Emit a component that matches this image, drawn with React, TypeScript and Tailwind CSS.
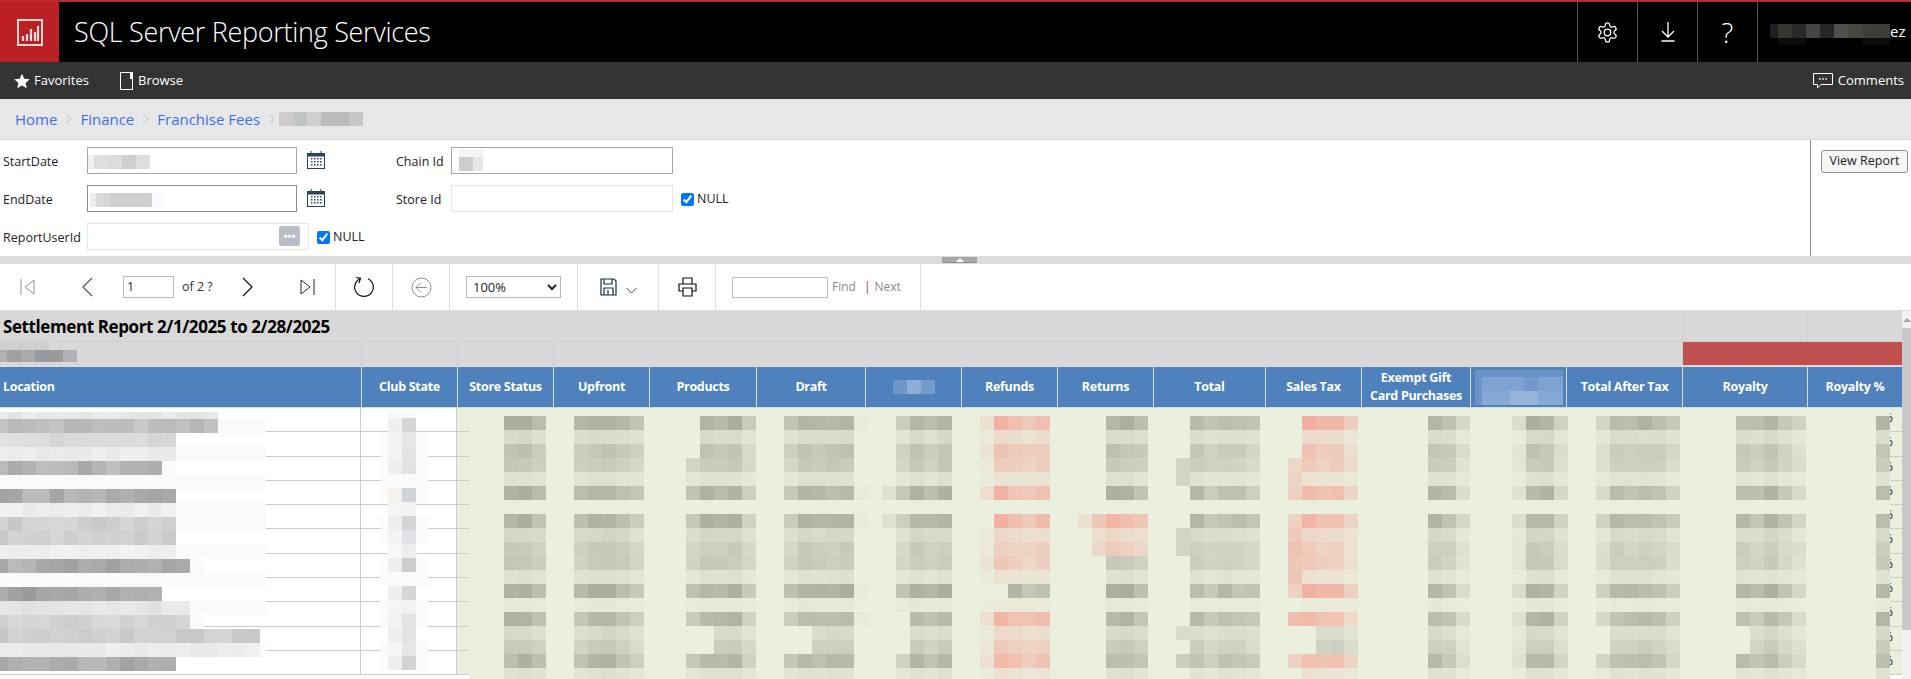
import React from "react";

const FONT = "font-['Open_Sans','Noto_Sans',sans-serif]";
const GRID = "grid grid-cols-[361px_96px_96px_96px_107px_109px_96px_96px_96px_112px_96px_109px_96px_116px_125px_95px]";

type R = { x: number; y: number; w: number; h: number; c: string };

const hex = (s: string) => [1, 3, 5].map((i) => parseInt(s.slice(i, i + 2), 16));
const mix = (a: string, b: string, t: number) => {
  const A = hex(a);
  const B = hex(b);
  const v = Math.pow(Math.max(0, Math.min(1, t)), 1.3);
  return `rgb(${A.map((n, i) => Math.round(n + (B[i] - n) * v)).join(",")})`;
};
const jitter = (a: number, b: number) => {
  const s = Math.sin(a * 12.9898 + b * 78.233) * 43758.5453;
  return (s - Math.floor(s) - 0.5) * 0.16;
};

const GREEN = "#eaefde";
const GREY = "#a9ae9e";
const PINK = "#f2ae9f";
const BANDS = [0.95, 0.4, 0.72, 0.65, 0.3, 0.9, 0.03, 0.92, 0.45, 0.62, 0.64, 0.3, 0.95, 0.17, 0.88, 0.42, 0.62, 0.85, 0.3];

type Col = {
  k: number;
  p: number[];
  pink?: boolean;
  skip?: Record<number, number>;
  extra?: Record<number, [number, number]>;
};

const COLS: Col[] = [
  { k: 36, p: [1, 1.05, 0.85] },
  { k: 41, p: [0.85, 1, 1.05, 0.9, 0.7] },
  { k: 49, p: [0.75, 1, 0.95, 1, 0.65], skip: { 0: 1, 1: 1, 2: 1, 15: 2, 16: 2 } },
  { k: 56, p: [0.75, 1, 0.95, 0.95, 1], skip: { 15: 2, 16: 2 }, extra: { 0: [61, 0.12], 5: [61, 0.12], 7: [61, 0.12], 12: [61, 0.12], 14: [61, 0.12] } },
  { k: 64, p: [0.7, 1, 0.85, 1], skip: { 14: 1, 15: 1, 16: 1 }, extra: { 5: [63, 0.3], 7: [63, 0.3] } },
  { k: 70, p: [0.35, 1, 0.88, 0.78, 0.88], pink: true, skip: { 7: 1, 12: 2 } },
  { k: 79, p: [1, 1, 0.85] },
  { k: 85, p: [0.9, 0.75, 0.85, 0.8, 0.7], extra: { 3: [84, 0.5], 4: [84, 0.5], 8: [84, 0.5], 9: [84, 0.5], 15: [84, 0.4], 17: [84, 0.6] } },
  { k: 93, p: [1, 0.9, 0.88, 0.55], pink: true, extra: { 3: [92, 0.45], 4: [92, 0.5], 5: [92, 0.55], 7: [92, 0.55], 8: [92, 0.65], 9: [92, 0.75], 10: [92, 0.7], 11: [92, 0.7], 12: [92, 0.55], 14: [92, 0.8], 17: [92, 0.55] } },
  { k: 102, p: [1, 0.85, 0.45] },
  { k: 108, p: [0.35, 1, 1, 0.55] },
  { k: 114, p: [0.5, 0.88, 0.85, 0.92, 0.85, 0.6], skip: { 15: 1, 16: 1 } },
  { k: 124, p: [0.9, 0.8, 1, 0.75, 0.5], skip: { 15: 1, 16: 1 } },
  { k: 134, p: [0.95] },
];

const numericCells = (): R[] => {
  const out: R[] = [{ x: 469, y: 2, w: 1421, h: 271, c: GREEN }];
  COLS.forEach((col) => {
    BANDS.forEach((b, band) => {
      const y = 8 + band * 14;
      const skip = col.skip?.[band] ?? 0;
      col.p.forEach((m, i) => {
        if (i < skip) return;
        let pink = !!col.pink;
        if (col.k === 70 && band === 12) pink = false;
        if (col.k === 93 && (band === 15 || band === 16) && i < 1) return;
        if (col.k === 93 && (band === 15 || band === 16)) pink = false;
        const t = b * m + jitter(col.k + i, band) * b;
        out.push({ x: (col.k + i) * 14, y, w: 14, h: 14, c: mix(GREEN, pink ? PINK : GREY, t) });
      });
      const ex = col.extra?.[band];
      if (ex) out.push({ x: ex[0] * 14, y, w: 14, h: 14, c: mix(GREEN, col.pink ? PINK : GREY, ex[1]) });
    });
    if (col.k === 79) {
      [7, 8, 9].forEach((band) => {
        const y = 8 + band * 14;
        out.push({ x: 79 * 14 - 14, y, w: 14, h: 14, c: mix(GREEN, PINK, BANDS[band] * 0.75) });
        [0, 1, 2].forEach((i) => out.push({ x: (79 + i) * 14, y, w: 14, h: 14, c: mix(GREEN, PINK, BANDS[band] * (1 - i * 0.12)) }));
      });
      out.push({ x: 77 * 14, y: 8 + 7 * 14, w: 14, h: 14, c: mix(GREEN, PINK, 0.3) });
    }
  });
  return out;
};

const LOC: [number, number, number, number][] = [
  [4, 218, 0.3, 218],
  [11, 218, 0.66, 266],
  [25, 176, 0.42, 176],
  [39, 176, 0.26, 266],
  [53, 162, 0.74, 176],
  [67, 0, 0.02, 266],
  [81, 176, 0.78, 176],
  [95, 176, 0.24, 266],
  [109, 176, 0.52, 266],
  [123, 176, 0.52, 176],
  [137, 176, 0.22, 266],
  [151, 190, 0.78, 204],
  [165, 0, 0.03, 266],
  [179, 162, 0.84, 162],
  [193, 190, 0.32, 266],
  [207, 190, 0.5, 204],
  [221, 260, 0.52, 260],
  [235, 260, 0.25, 266],
  [249, 176, 0.78, 176],
];

const locationCells = (): R[] => {
  const out: R[] = [];
  LOC.forEach(([y, end, t, lightEnd], row) => {
    const h = row === 0 ? 7 : 14;
    if (lightEnd > 0) out.push({ x: 0, y, w: lightEnd, h, c: "#fafafa" });
    if (end <= 0) return;
    let x = 0;
    let i = 0;
    while (x < end) {
      const w = x === 0 ? 8 : 14;
      out.push({ x, y, w, h, c: mix("#ffffff", "#8f8f8f", t + jitter(i, row) * 1.2 * (t + 0.2)) });
      x += w;
      i++;
    }
  });
  return out;
};

const CLUB: [string, string][] = [
  ["#efefef", "#d6d6da"], ["#f3f3f3", "#e6e6e6"], ["#f3f3f3", "#e3e3e5"], ["#eeeeee", "#e2e2e2"],
  ["#fafafa", "#fafafa"], ["#f5f2ee", "#d0d3d8"], ["#f5f5f5", "#f2f2f2"], ["#eeeeee", "#d5d5d5"],
  ["#f3f3f0", "#dfe2e6"], ["#f8f8f6", "#ededf0"], ["#eeeeee", "#cdcdd0"], ["#fafafa", "#fafafa"],
  ["#eeeeee", "#d6d6d8"], ["#f5f5f5", "#f2f2f2"], ["#f2f2f2", "#e3e3e3"], ["#eeeeee", "#e3e3e5"],
  ["#f6f6f6", "#e6e6e6"], ["#eeeeee", "#d3d3d3"],
];

const clubCells = (): R[] => {
  const out: R[] = [{ x: 388, y: 3, w: 28, h: 7, c: "#f8f8f8" }];
  CLUB.forEach(([a, b], i) => {
    const y = 10 + i * 14;
    if (i % 3 !== 0 || i === 3) {
      out.push({ x: 381, y, w: 47, h: 14, c: "#fbfbfb" });
    }
    out.push({ x: 388, y, w: 14, h: 14, c: a });
    out.push({ x: 402, y, w: 14, h: 14, c: b });
  });
  return out;
};

function Blocks({ w, h, cells, className = "" }: { w: number; h: number; cells: R[]; className?: string }) {
  return (
    <svg width={w} height={h} viewBox={`0 0 ${w} ${h}`} shapeRendering="crispEdges" className={className}>
      {cells.map((c, i) => (
        <rect key={i} x={c.x} y={c.y} width={c.w} height={c.h} fill={c.c} />
      ))}
    </svg>
  );
}

const strip = (colors: string[], h = 14, first = 14, y = 0): R[] => {
  let x = 0;
  return colors.map((c, i) => {
    const w = i === 0 ? first : 14;
    const r = { x, y, w, h, c };
    x += w;
    return r;
  });
};

function Calendar() {
  return (
    <svg width="20" height="20" viewBox="0 0 20 20" fill="none" className="ml-[9px]">
      <rect x="1.5" y="3.5" width="17" height="15" stroke="#2a4258" />
      <rect x="1.5" y="3.5" width="17" height="3" fill="#2a4258" />
      <path d="M5 1v3M15 1v3" stroke="#2a4258" />
      {[8, 11, 14].map((y) =>
        [5, 8, 11, 14].map((x) => <rect key={`${x}-${y}`} x={x} y={y} width="1.5" height="1.5" fill="#33475b" />)
      )}
    </svg>
  );
}

function Check({ label }: { label: string }) {
  return (
    <label className="flex items-center gap-[3px] pt-[3px] text-[12.5px] text-[#222]">
      <input type="checkbox" defaultChecked className="w-[13px] h-[13px] m-0" readOnly />
      {label}
    </label>
  );
}

function Chev() {
  return (
    <svg width="8" height="12" viewBox="0 0 8 12" fill="none" className="ml-[8px] mr-[7px]">
      <path d="M1.5 1.5 6 6l-4.5 4.5" stroke="#bdbdbd" />
    </svg>
  );
}

const HEADS: string[] = ["Club State", "Store Status", "Upfront", "Products", "Draft", "", "Refunds", "Returns", "Total", "Sales Tax"];

const BODY_ROWS = Array.from({ length: 11 }, (_, i) => i);

export default function App() {
  return (
    <div className={`${FONT} w-[1911px] h-[679px] overflow-hidden bg-white flex flex-col`}>
      {/* top bar */}
      <header className="h-[62px] shrink-0 bg-black border-t-2 border-[#bd2a30] flex items-stretch text-white">
        <div className="w-[59px] bg-[#bb2025] flex items-center justify-center">
          <svg width="26" height="27" viewBox="0 0 26 27" fill="none">
            <rect x="1" y="1" width="24" height="25" stroke="#f3d4d4" strokeWidth="2" />
            <path d="M6 17v5M10 15v7M14 10v12M18 13v9M21 7v15" stroke="#f7dede" strokeWidth="2.2" />
          </svg>
        </div>
        <div className="flex-1 pl-[15px] flex items-center text-[27px] font-light tracking-[-0.3px]">SQL Server Reporting Services</div>
        <div className="w-[60px] border-l border-[#555] flex items-center justify-center">
          <svg width="23" height="23" viewBox="0 0 24 24" fill="none" stroke="#fff" strokeWidth="1.3">
            <path d="M12.2 2h-.4a2 2 0 0 0-2 2v.2a2 2 0 0 1-1 1.7l-.4.2a2 2 0 0 1-2 0l-.2-.1a2 2 0 0 0-2.7.7l-.2.4a2 2 0 0 0 .7 2.7l.2.1a2 2 0 0 1 1 1.7v.5a2 2 0 0 1-1 1.7l-.2.1a2 2 0 0 0-.7 2.7l.2.4a2 2 0 0 0 2.7.7l.2-.1a2 2 0 0 1 2 0l.4.2a2 2 0 0 1 1 1.7v.2a2 2 0 0 0 2 2h.4a2 2 0 0 0 2-2v-.2a2 2 0 0 1 1-1.7l.4-.2a2 2 0 0 1 2 0l.2.1a2 2 0 0 0 2.7-.7l.2-.4a2 2 0 0 0-.7-2.7l-.2-.1a2 2 0 0 1-1-1.7v-.5a2 2 0 0 1 1-1.7l.2-.1a2 2 0 0 0 .7-2.7l-.2-.4a2 2 0 0 0-2.7-.7l-.2.1a2 2 0 0 1-2 0l-.4-.2a2 2 0 0 1-1-1.7V4a2 2 0 0 0-2-2Z" />
            <circle cx="12" cy="12" r="3.4" />
          </svg>
        </div>
        <div className="w-[60px] border-l border-[#555] flex items-center justify-center">
          <svg width="14" height="20" viewBox="0 0 14 20" fill="none" stroke="#fff" strokeWidth="1.3">
            <path d="M7 0v15M1 9l6 6 6-6M0.5 19h13" />
          </svg>
        </div>
        <div className="w-[60px] border-l border-[#555] flex items-center justify-center text-[28px] font-light">?</div>
        <div className="w-[154px] border-l border-[#555] flex items-center pl-[12px]">
          <Blocks
            w={120}
            h={21}
            cells={[
              ...strip(["#1c2024", "#37362f", "#292928", "#444443", "#262626", "#4f4f4f", "#47473f", "#3f3f3a", "#3c3c38"], 14, 8),
              { x: 8, y: 14, w: 28, h: 7, c: "#0c0c0a" },
              { x: 92, y: 14, w: 28, h: 7, c: "#0c0c0a" },
            ]}
            className="mb-[-6px] -mt-[1px]"
          />
          <span className="text-[15px] ml-0 -mt-[1px]">ez</span>
        </div>
      </header>

      {/* nav */}
      <nav className="h-[37px] shrink-0 bg-[#333333] flex items-center text-white text-[13px] pl-[14px] pr-[7px]">
        <svg width="16" height="16" viewBox="0 0 24 24" fill="#fff">
          <path d="m12 1 3.4 7.6 8.2.8-6.2 5.5 1.8 8.1L12 18.8 4.8 23l1.8-8.1L.4 9.4l8.2-.8Z" />
        </svg>
        <span className="ml-[4px]">Favorites</span>
        <svg width="13" height="18" viewBox="0 0 13 18" fill="none" className="ml-[31px]">
          <rect x="0.5" y="0.5" width="12" height="17" stroke="#fff" />
          <rect x="10" y="1" width="2" height="6" fill="#fff" />
        </svg>
        <span className="ml-[5px]">Browse</span>
        <svg width="20" height="16" viewBox="0 0 20 16" fill="none" className="ml-auto">
          <path d="M.5.5h19v11H8l-3.5 3.5V11.5H.5Z" stroke="#fff" />
          <path d="M6 6h1.6M9.2 6h1.6M12.4 6h1.6" stroke="#fff" strokeWidth="1.6" />
        </svg>
        <span className="ml-[5px] text-[13px]">Comments</span>
      </nav>

      {/* breadcrumb */}
      <div className="h-[41px] shrink-0 bg-[#e7e7e7] border-b border-[#dadada] flex items-center pl-[15px] text-[15px] text-[#3a6ff0]">
        <span>Home</span>
        <Chev />
        <span>Finance</span>
        <Chev />
        <span>Franchise Fees</span>
        <Chev />
        <Blocks w={84} h={14} cells={strip(["#cfcbca", "#c2c5c5", "#cfd0cf", "#bdbcbb", "#bdbaba", "#c7c7c7"], 14, 14)} className="-ml-[4px]" />
      </div>

      {/* params */}
      <section className="h-[116px] shrink-0 flex text-[12.5px] text-[#222]">
        <div className="w-[1810px] flex">
          <div className="w-[396px] pl-[3px] pt-[7px] flex flex-col gap-[12px]">
            <div className="flex items-center h-[26px]">
              <span className="w-[84px] pt-[4px]">StartDate</span>
              <div className="w-[210px] h-[27px] border border-[#a6a6a6] flex items-center pt-[3px]">
                <Blocks w={62} h={14} cells={strip(["#f1f1f1", "#e0dfde", "#dcdcdb", "#cfcfcf", "#dedede"], 14, 6)} />
              </div>
              <Calendar />
            </div>
            <div className="flex items-center h-[26px]">
              <span className="w-[84px] pt-[4px]">EndDate</span>
              <div className="w-[210px] h-[27px] border border-[#8c8c8c] flex items-center pl-[2px] pt-[3px]">
                <Blocks w={76} h={14} cells={strip(["#ececec", "#d8d8d8", "#d0d0d0", "#d2d0ce", "#cfcfcf", "#fafaff"], 14, 6)} />
              </div>
              <Calendar />
            </div>
            <div className="flex items-center h-[26px]">
              <span className="w-[84px] pt-[4px]">ReportUserId</span>
              <div className="w-[222px] h-[27px] border border-[#e6e6e6] flex items-center justify-end pr-[8px]">
                <div className="w-[21px] h-[20px] rounded-[2px] bg-[#b9bec8] flex items-center justify-center text-white text-[10px] font-bold leading-none">
                  •••
                </div>
              </div>
              <div className="ml-[8px]">
                <Check label="NULL" />
              </div>
            </div>
          </div>
          <div className="pt-[7px] flex flex-col gap-[12px]">
            <div className="flex items-center h-[26px]">
              <span className="w-[55px] pt-[4px]">Chain Id</span>
              <div className="w-[222px] h-[27px] border border-[#a6a6a6] flex items-center pl-[7px]">
                <Blocks
                  w={24}
                  h={21}
                  cells={[
                    { x: 0, y: 0, w: 24, h: 7, c: "#f4f4f4" },
                    { x: 0, y: 7, w: 14, h: 14, c: "#cfcdcc" },
                    { x: 14, y: 7, w: 10, h: 14, c: "#e6e6e6" },
                  ]}
                />
              </div>
            </div>
            <div className="flex items-center h-[26px]">
              <span className="w-[55px] pt-[4px]">Store Id</span>
              <div className="w-[222px] h-[27px] border border-[#e6e6e6]" />
              <div className="ml-[8px]">
                <Check label="NULL" />
              </div>
            </div>
          </div>
        </div>
        <div className="flex-1 border-l border-[#8c8c8c] pl-[10px] pt-[10px]">
          <button className="w-[87px] h-[23px] border border-[#8f8f8f] rounded-[3px] bg-[#f5f5f5] text-[12.5px] text-[#222]">View Report</button>
        </div>
      </section>

      {/* splitter */}
      <div className="h-[8px] shrink-0 bg-[#dcdcdc] flex items-center justify-center pl-[8px]">
        <div className="w-[35px] h-[6px] bg-[#a8a8a8] border-b border-[#8d8d8d] flex items-center justify-center">
          <div className="w-0 h-0 border-l-[4px] border-r-[4px] border-b-[4px] border-l-transparent border-r-transparent border-b-white" />
        </div>
      </div>

      {/* toolbar */}
      <div className="h-[47px] shrink-0 border-b border-[#dddddd] flex items-stretch text-[12.5px] text-[#444]">
        <div className="w-[336px] border-r border-[#dddddd] flex items-center pl-[20px]">
          <svg width="15" height="16" viewBox="0 0 15 16" fill="none" stroke="#8a9098">
            <path d="M1 0v16M14 1 5 8l9 7Z" />
          </svg>
          <svg width="11" height="20" viewBox="0 0 11 20" fill="none" stroke="#555" strokeWidth="1.2" className="ml-[47px]">
            <path d="M10 1 1 10l9 9" />
          </svg>
          <div className="ml-[30px] w-[51px] h-[22px] border border-[#b9b9b9] pl-[3px] flex items-center text-[#222]">1</div>
          <span className="ml-[8px] text-[#333]">of 2 ?</span>
          <svg width="11" height="20" viewBox="0 0 11 20" fill="none" stroke="#111" strokeWidth="1.2" className="ml-[29px]">
            <path d="m1 1 9 9-9 9" />
          </svg>
          <svg width="15" height="16" viewBox="0 0 15 16" fill="none" stroke="#222" className="ml-[47px]">
            <path d="M14 0v16M1 1l9 7-9 7Z" />
          </svg>
        </div>
        <div className="w-[57px] border-r border-[#dddddd] flex items-center justify-center">
          <svg width="22" height="22" viewBox="0 0 22 22" fill="none" stroke="#111" strokeWidth="1.2">
            <path d="M7 2.7a9.3 9.3 0 1 0 8 0" />
            <path d="M3 1.5 7.5 2.3 6 7" />
          </svg>
        </div>
        <div className="w-[57px] border-r border-[#dddddd] flex items-center justify-center">
          <svg width="21" height="21" viewBox="0 0 21 21" fill="none" stroke="#8f8f8f">
            <circle cx="10.5" cy="10.5" r="9.5" />
            <path d="M16 10.5H5M10 5.5l-5 5 5 5" />
          </svg>
        </div>
        <div className="w-[128px] border-r border-[#dddddd] flex items-center pl-[16px]">
          <select defaultValue="100%" className="w-[95px] h-[22px] border border-[#b9b9b9] text-[13px] text-[#222] pl-[2px]">
            <option>100%</option>
          </select>
        </div>
        <div className="w-[81px] border-r border-[#dddddd] flex items-center pl-[22px]">
          <svg width="17" height="18" viewBox="0 0 17 18" fill="none" stroke="#1c2c3a" strokeWidth="1.2">
            <path d="M1 1h13l2 2v14H1Z" />
            <path d="M4 1v5h8V1M4 17v-7h9v7M8 12v5" />
          </svg>
          <svg width="11" height="7" viewBox="0 0 11 7" fill="none" stroke="#444" className="ml-[9px] mt-[6px]">
            <path d="m.5 1 5 5 5-5" />
          </svg>
        </div>
        <div className="w-[57px] border-r border-[#dddddd] flex items-center justify-center">
          <svg width="19" height="20" viewBox="0 0 19 20" fill="none" stroke="#111" strokeWidth="1.2">
            <path d="M5 7V1h9v6M5 14H1V7h17v7h-4" />
            <path d="M5 11h9v8H5Z" />
          </svg>
        </div>
        <div className="w-[205px] border-r border-[#dddddd] flex items-center pl-[16px] text-[12px] text-[#8a8a8a]">
          <div className="w-[96px] h-[21px] border border-[#bdbdbd]" />
          <span className="ml-[4px]">Find</span>
          <span className="ml-[8px] text-[#a33]">|</span>
          <span className="ml-[4px]">Next</span>
        </div>
      </div>

      {/* report */}
      <div className="flex-1 min-h-0 flex">
        <div className="w-[1902px] flex flex-col">
          <div className={`${GRID} h-[31px] shrink-0 bg-[#d8d8d8] border-b border-[#cfcfcf]`}>
            <div className="col-span-14 flex items-center pl-[3px] pt-[2px] text-[17px] font-bold text-black tracking-[-0.4px]">
              Settlement Report 2/1/2025 to 2/28/2025
            </div>
            <div className="border-l border-[#cfcfcf]" />
            <div className="border-l border-[#cfcfcf]" />
          </div>
          <div className={`${GRID} h-[24px] shrink-0 bg-[#d8d8d8]`}>
            <div className="flex items-start">
              <Blocks
                w={77}
                h={20}
                cells={[
                  { x: 0, y: 0, w: 49, h: 8, c: "#cfcfcf" },
                  ...strip(["#b0b0b0", "#a0a0a0", "#aaaaaa", "#949aa0", "#9a9a9a", "#b2b2b4"], 14, 7, 8),
                ]}
              />
            </div>
            <div className="border-l border-[#cfcfcf]" />
            <div className="border-l border-[#cfcfcf]" />
            <div className="border-l border-[#cfcfcf] col-span-11" />
            <div className="col-span-2 bg-[#c0504d] mb-[1px] border-l border-[#cfcfcf]" />
          </div>
          <div className={`${GRID} h-[42px] shrink-0 bg-[#4f81bd] border-y border-[#dcdcdc] text-white text-[12.5px] font-bold leading-[18px] tracking-[-0.3px]`}>
            <div className="flex items-center pl-[3px]">Location</div>
            {HEADS.map((h, i) => (
              <div key={i} className="border-l border-[#dcdcdc] flex items-center justify-center text-center">
                {h || <Blocks w={42} h={14} cells={strip(["#6f96c8", "#8fadd6", "#739bcb"])} />}
              </div>
            ))}
            <div className="border-l border-[#dcdcdc] flex items-center justify-center text-center">
              Exempt Gift
              <br />
              Card Purchases
            </div>
            <div className="border-l border-[#dcdcdc] flex items-center justify-center">
              <Blocks
                w={88}
                h={35}
                cells={[
                  { x: 0, y: 0, w: 88, h: 7, c: "#6a93c8" },
                  { x: 0, y: 7, w: 88, h: 14, c: "#7ea3d2" },
                  { x: 7, y: 21, w: 81, h: 14, c: "#87a9d5" },
                  { x: 35, y: 21, w: 28, h: 14, c: "#96b4da" },
                  { x: 0, y: 0, w: 7, h: 35, c: "#6d94c9" },
                  { x: 49, y: 7, w: 14, h: 14, c: "#7299cc" },
                ]}
              />
            </div>
            <div className="border-l border-[#dcdcdc] flex items-center justify-center">Total After Tax</div>
            <div className="border-l border-[#dcdcdc] flex items-center justify-center">Royalty</div>
            <div className="border-l border-[#dcdcdc] flex items-center justify-center">Royalty %</div>
          </div>
          <div className="relative flex-1 min-h-0 overflow-hidden">
            {BODY_ROWS.map((r) => (
              <div key={r} className={`${GRID} h-[24.3px] border-b border-[#cccccc] text-[12px] text-black`}>
                <div className="border-r border-[#cccccc]" />
                <div className="border-r border-[#cccccc]" />
                {Array.from({ length: 13 }, (_, i) => (
                  <div key={i} className="bg-[#eaefde]" />
                ))}
                <div className="bg-[#eaefde] flex justify-end pr-[9px] leading-[20px]">%</div>
              </div>
            ))}
            <Blocks w={1890} h={271} cells={[...locationCells(), ...clubCells(), ...numericCells()]} className="absolute left-0 top-0" />
          </div>
        </div>
        <div className="flex-1 bg-[#f1f1f1] flex flex-col">
          <div className="h-[17px] flex items-center justify-center">
            <div className="w-0 h-0 border-l-[4px] border-r-[4px] border-b-[4px] border-l-transparent border-r-transparent border-b-[#a3a3a3]" />
          </div>
          <div className="h-[302px] bg-[#c8c8c8]" />
        </div>
      </div>
    </div>
  );
}
